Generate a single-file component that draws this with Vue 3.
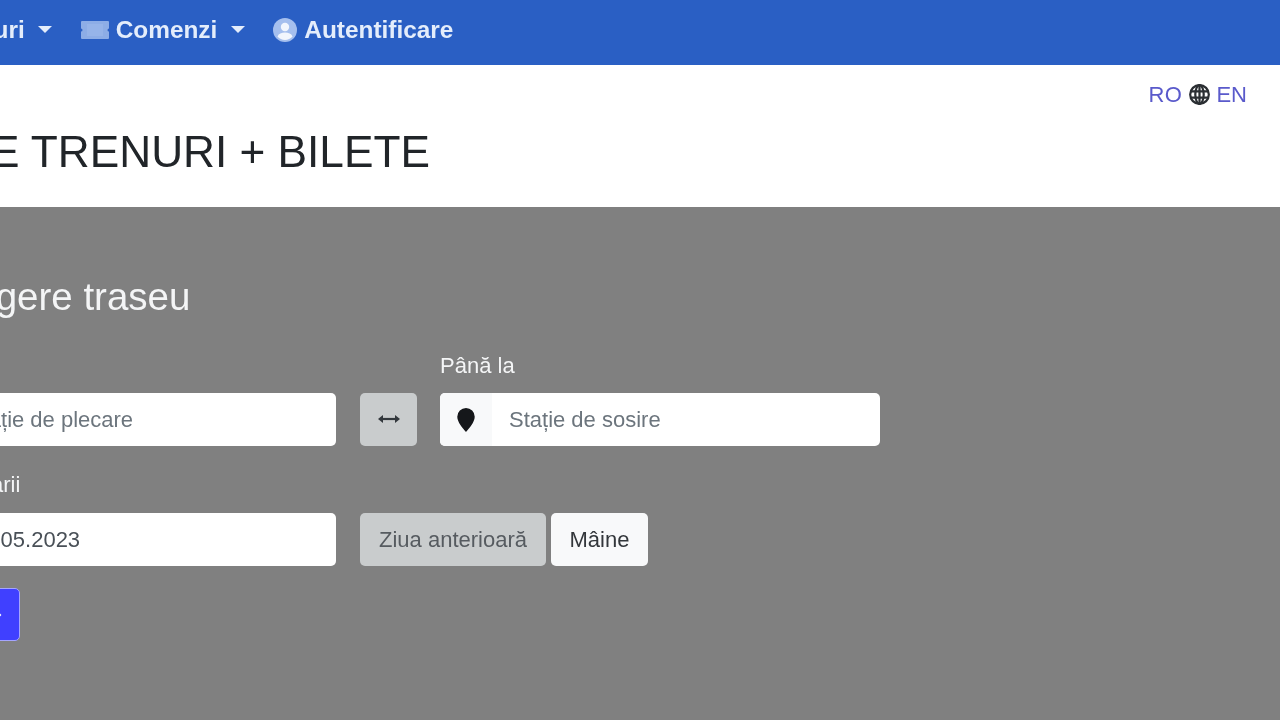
<script setup>
const dateLabel = 'Data plecarii'
</script>

<template>
  <div class="page">
    <div class="sheet">
      <nav class="nav">
        <a class="nav-item">Trenuri<i class="caret"></i></a>
        <a class="nav-item">
          <svg class="ticket" viewBox="0 0 28 18" width="28" height="18">
            <path fill="#8dade6" d="M1 0h26a1 1 0 0 1 1 1v6.500a1.500 1.500 0 0 0 0 3V17a1 1 0 0 1-1 1H1a1 1 0 0 1-1-1v-6.500a1.500 1.500 0 0 0 0-3V1a1 1 0 0 1 1-1z"/>
            <rect x="6" y="3" width="16" height="12" fill="#96b4e9"/>
          </svg>
          <span class="label">Comenzi</span><i class="caret second-caret"></i>
        </a>
        <a class="nav-item">
          <svg class="user" viewBox="0 0 24 24" width="24" height="24">
            <circle cx="12" cy="12" r="12" fill="#a5bfee"/>
            <circle cx="12" cy="9" r="4.200" fill="#f2f6fd"/>
            <path fill="#f2f6fd" d="M4.500 18.500c1.200-3 4-4 7.500-4s6.300 1 7.500 4a10 10 0 0 1-15 0z"/>
          </svg>
          <span class="label">Autentificare</span>
        </a>
      </nav>

      <header class="head">
        <div class="lang">
          <a class="ro">RO</a>
          <svg viewBox="0 0 16 16" width="21" height="21" fill="none" stroke="#2b2f33" stroke-width="1.700">
            <circle cx="8" cy="8" r="7.100"/>
            <ellipse cx="8" cy="8" rx="3.200" ry="7.100"/>
            <path d="M1 5.600h14M1 10.400h14M8 1v14"/>
          </svg>
          <a>EN</a>
        </div>
        <h1 class="title">DE TRENURI + BILETE</h1>
      </header>

      <main class="main">
        <h2 class="heading">Alegere traseu</h2>

        <div class="row labels">
          <span class="col"></span>
          <span class="swap-space"></span>
          <label class="col">Până la</label>
        </div>
        <div class="row">
          <div class="col field">
            <span class="addon wide">
              <svg class="pin" viewBox="0 0 16 22" width="18" height="24"><path fill="#15171a" d="M8 0a8 8 0 0 1 8 8c0 4.800-5 10.500-8 14-3-3.500-8-9.200-8-14a8 8 0 0 1 8-8z"/></svg>
            </span>
            <span class="placeholder">Stație de plecare</span>
          </div>
          <button class="swap" type="button">
            <svg viewBox="0 0 22 12" width="22" height="12" fill="none" stroke="#33383d" stroke-width="2.200">
              <path d="M2 6h18"/>
              <path fill="#33383d" stroke="none" d="M0 6l5-4v8zM22 6l-5-4v8z"/>
            </svg>
          </button>
          <div class="col field">
            <span class="addon">
              <svg class="pin" viewBox="0 0 16 22" width="18" height="24"><path fill="#15171a" d="M8 0a8 8 0 0 1 8 8c0 4.800-5 10.500-8 14-3-3.500-8-9.200-8-14a8 8 0 0 1 8-8z"/></svg>
            </span>
            <span class="placeholder">Stație de sosire</span>
          </div>
        </div>

        <div class="row labels second">
          <label class="col date-label">{{ dateLabel }}</label>
        </div>
        <div class="row">
          <div class="col field">
            <span class="addon date"></span>
            <span class="value">13.05.2023</span>
          </div>
          <div class="day-buttons">
            <button class="day disabled" type="button">Ziua anterioară</button>
            <button class="day next" type="button">Mâine</button>
          </div>
        </div>

        <button class="search" type="button" aria-label="Caută">
          <svg viewBox="0 0 18 14" width="18" height="14" fill="none" stroke="#fff" stroke-width="2"><path d="M0 7h16M11 2l5 5-5 5"/></svg>
        </button>
      </main>
    </div>
  </div>
</template>

<style>
html, body { margin: 0; background: #808080; }
</style>

<style scoped>
.page {
  width: 1280px;
  height: 720px;
  overflow: hidden;
  background: #808080;
  font-family: "Liberation Sans", Arial, sans-serif;
  font-size: 22px;
  color: #212529;
  filter: blur(0.5px);
}
.sheet {
  margin-left: -104px;
  width: 1384px;
}
.nav {
  height: 65px;
  background: #2a5fc4;
  display: flex;
  align-items: center;
  gap: 29px;
  padding: 0 0 6px 46px;
  box-sizing: border-box;
}
.nav-item {
  display: flex;
  align-items: center;
  font-size: 24.4px;
  font-weight: 700;
  color: #e4edfb;
}
.label { margin-left: 7px; }
.caret {
  width: 0;
  height: 0;
  margin-left: 13px;
  border-left: 7px solid transparent;
  border-right: 7px solid transparent;
  border-top: 7px solid #e4edfb;
}
.second-caret { margin-left: 14px; margin-right: -1px; }
.ticket, .user { flex: none; }
.head {
  height: 142px;
  background: #fff;
  box-sizing: border-box;
  padding-top: 13px;
}
.lang {
  display: flex;
  justify-content: flex-end;
  align-items: center;
  gap: 6px;
  padding-right: 33px;
  height: 33px;
  color: #5a5acb;
}
.ro { margin-right: 1px; letter-spacing: 0.5px; }
.title {
  margin: 14px 0 0 62px;
  font-size: 44.2px;
  line-height: 53px;
  font-weight: 400;
}
.main {
  padding-top: 67px;
  color: #f4f5f6;
}
.heading {
  margin: 0 0 29px 44px;
  font-size: 38.5px;
  line-height: 46px;
  font-weight: 400;
}
.row {
  display: flex;
  gap: 23px;
}
.labels {
  line-height: 33px;
  margin-bottom: 11px;
  height: 33px;
}
.labels.second { margin-top: 23px; }
.date-label { padding-left: 2px; margin-top: -1px; }
.col { width: 440px; flex: none; }
.swap-space { width: 58px; flex: none; }
.field {
  height: 53px;
  background: #fff;
  border-radius: 5px;
  display: flex;
  align-items: center;
  overflow: hidden;
  box-sizing: border-box;
}
.addon {
  width: 52px;
  height: 100%;
  flex: none;
  background: #f8f9fa;
  display: flex;
  align-items: center;
  justify-content: center;
  margin-right: 17px;
}
.addon.wide { width: 55px; }
.addon.date { width: 57px; }
.placeholder { color: #6c757d; }
.value { color: #495057; }
.swap {
  width: 57px;
  height: 53px;
  margin-left: 1px;
  padding: 0 0 2px;
  border: 0;
  border-radius: 5px;
  background: #c9cccd;
  display: flex;
  align-items: center;
  justify-content: center;
}
.day-buttons { display: flex; gap: 5px; margin-left: 1px; }
.day {
  height: 53px;
  width: 97px;
  padding: 0;
  border: 0;
  border-radius: 5px;
  background: #f8f9fa;
  color: #33373b;
  font: inherit;
}
.day.disabled { width: 186px; background: #c9cccd; color: #565b60; }
.search {
  display: flex;
  align-items: center;
  justify-content: flex-end;
  width: 124px;
  height: 53px;
  margin-top: 22px;
  padding: 0 17px 0 0;
  border: 1.5px solid #a5a5ff;
  border-radius: 5px;
  background: #4040ff;
  box-sizing: border-box;
}
</style>
